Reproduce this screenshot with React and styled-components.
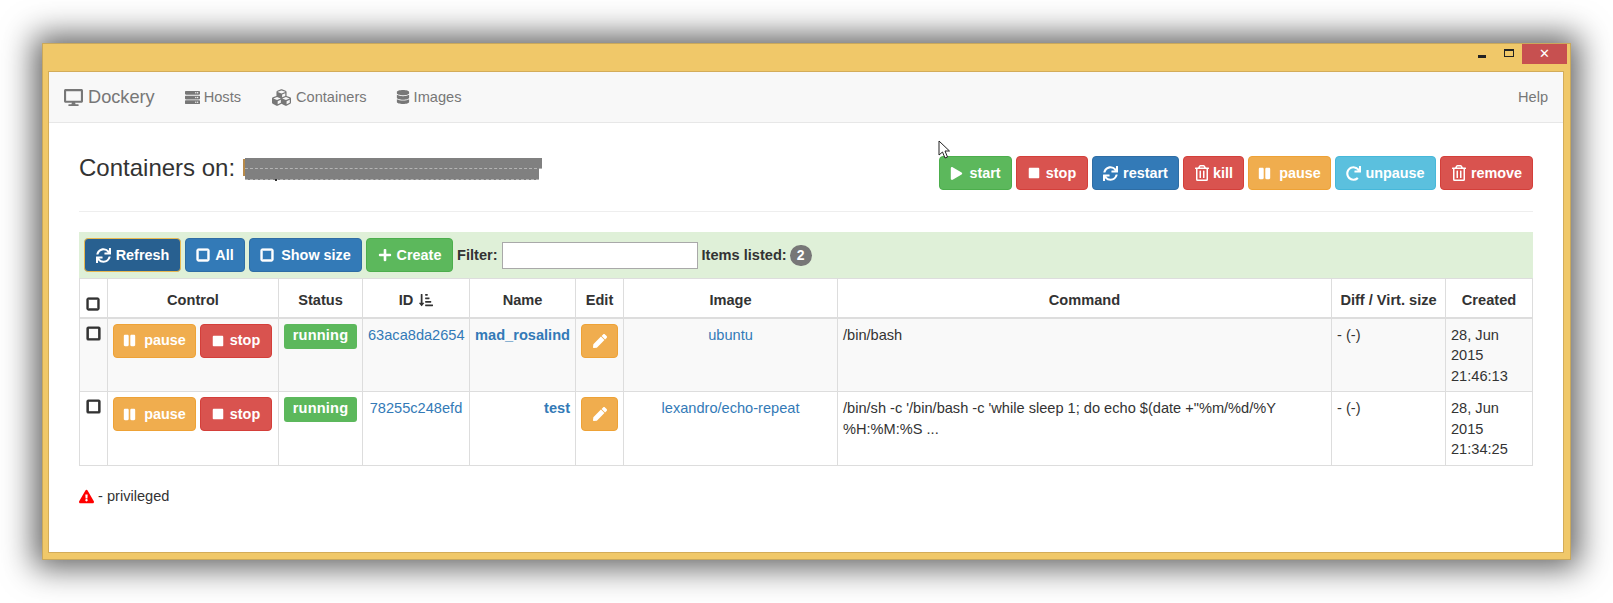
import styled, { createGlobalStyle } from 'styled-components';
import {
  FaDesktop, FaServer, FaCubes, FaDatabase, FaPlay, FaStop, FaSync, FaRegTrashAlt, FaPause, FaRedo,
  FaRegSquare, FaPlus, FaPen, FaSortAmountDownAlt, FaExclamationTriangle,
} from 'react-icons/fa';

const GlobalStyle = createGlobalStyle`
  html, body {
    margin: 0;
    height: 100%;
    overflow: hidden;
    background: #fff;
    font-family: "Liberation Sans", Arial, sans-serif;
    font-size: 14.6px;
    line-height: 20.6px;
    color: #333;
  }
`;

const Page = styled.div`
  padding: 43px 42px 0 42px;
`;

const Window = styled.div`
  position: relative;
  height: 517px;
  box-sizing: border-box;
  display: flex;
  flex-direction: column;
  background: #f0c869;
  border: 1px solid #c9a85c;
  box-shadow: 0 0 30px 8px rgba(0, 0, 0, 0.62);
  padding: 0 6px 6px 5px;
`;

const TitleBar = styled.div`
  height: 27px;
  flex: none;
  display: flex;
  justify-content: flex-end;
  align-items: flex-start;
  margin-right: -3px;
`;

const MinButton = styled.span`
  width: 8px;
  height: 3px;
  background: #222;
  margin: 11px 18px 0 0;
`;

const MaxButton = styled.span`
  width: 8px;
  height: 5px;
  border: 1px solid #222;
  border-top-width: 2px;
  margin: 5px 8px 0 0;
`;

const CloseButton = styled.span`
  width: 45px;
  height: 20px;
  background: #c75050;
  color: #fff;
  font-size: 13px;
  line-height: 19px;
  text-align: center;
`;

const Inner = styled.div`
  flex: 1;
  display: flex;
  flex-direction: column;
  background: #fff;
  border: 1px solid #d3ac5a;
`;

const Navbar = styled.nav`
  height: 50px;
  flex: none;
  display: flex;
  align-items: center;
  padding: 0 15px;
  background: #f8f8f8;
  border-bottom: 1px solid #e7e7e7;
  color: #777;
`;

const Brand = styled.span`
  display: flex;
  align-items: center;
  gap: 5px;
  font-size: 18.2px;
  margin-right: 30px;
  svg { font-size: 19px; }
`;

const NavLink = styled.span`
  display: flex;
  align-items: center;
  gap: ${props => props.$gap || 4}px;
  margin-right: ${props => props.$margin || 29}px;
  svg { font-size: ${props => props.$icon || 15}px; }
`;

const Help = styled.span`
  margin-left: auto;
`;

const Content = styled.main`
  padding: 33px 30px 0 30px;
`;

const HeaderRow = styled.div`
  display: flex;
  justify-content: space-between;
  padding-bottom: 21px;
  border-bottom: 1px solid #eee;
`;

const Heading = styled.h1`
  margin: -1px 0 0;
  display: flex;
  align-items: flex-start;
  gap: 10px;
  font-size: 24px;
  font-weight: 400;
  line-height: 26px;
  color: #333;
`;

const Redaction = styled.span`
  position: relative;
  display: block;
  width: 297px;
  margin-top: 3px;
  &::before {
    content: '';
    position: absolute;
    left: -2px;
    top: 1px;
    width: 2px;
    height: 17px;
    background: #b88a4a;
  }
  &::after {
    content: '';
    position: absolute;
    left: 30px;
    top: 21px;
    width: 2px;
    height: 2px;
    background: #333;
  }
`;

const RedactionBar = styled.span`
  display: block;
  height: 10px;
  width: ${props => props.$width}px;
  background: #808080;
  border-bottom: 1px dashed #b4b4b4;
`;

const ButtonRow = styled.div`
  display: flex;
  gap: ${props => props.$gap || 4}px;
`;

const colors = {
  success: ['#5cb85c', '#4cae4c'],
  danger: ['#d9534f', '#d43f3a'],
  primary: ['#337ab7', '#2e6da4'],
  warning: ['#f0ad4e', '#eea236'],
  info: ['#5bc0de', '#46b8da'],
  focus: ['#286090', '#e8b84f'],
};

const Button = styled.span`
  box-sizing: border-box;
  height: 34px;
  width: ${props => props.$width}px;
  display: flex;
  align-items: center;
  justify-content: center;
  gap: ${props => props.$gap ?? 5}px;
  border-radius: 4px;
  border: 1px solid ${props => colors[props.$kind][1]};
  background: ${props => colors[props.$kind][0]};
  color: #fff;
  font-weight: 700;
  font-size: 14.4px;
  svg { font-size: ${props => props.$icon || 14}px; flex: none; }
`;

const ThickSquare = styled(FaRegSquare)`
  stroke: currentColor;
  stroke-width: 36;
`;

const Toolbar = styled.div`
  display: flex;
  align-items: center;
  gap: 4px;
  height: 46px;
  box-sizing: border-box;
  margin-top: 20px;
  padding: 0 5px;
  background: #dff0d8;
  font-weight: 700;
`;

const FilterInput = styled.input`
  box-sizing: border-box;
  width: 196px;
  height: 27px;
  border: 1px solid #a9a9a9;
  background: #fff;
  padding: 0 4px;
`;

const Badge = styled.span`
  display: inline-block;
  width: 22px;
  height: 21px;
  margin-left: -1px;
  border-radius: 11px;
  background: #777;
  color: #fff;
  font-size: 14px;
  line-height: 21px;
  text-align: center;
`;

const Table = styled.table`
  width: 1453px;
  table-layout: fixed;
  border-collapse: collapse;
  border: 1px solid #ddd;
`;

const HeadCell = styled.th`
  box-sizing: border-box;
  height: 39px;
  padding: 0 4px 6px;
  border: 1px solid #ddd;
  border-bottom: 2px solid #ddd;
  font-weight: 700;
  white-space: nowrap;
  vertical-align: bottom;
  svg { font-size: 14px; vertical-align: -2px; margin-left: 2px; }
`;

const Row = styled.tr`
  background: ${props => props.$striped ? '#f9f9f9' : '#fff'};
`;

const Cell = styled.td`
  height: 73px;
  box-sizing: border-box;
  padding: 5px 5px 5px;
  border: 1px solid #ddd;
  vertical-align: top;
  text-align: ${props => props.$align || 'left'};
`;

const CheckIcon = styled(ThickSquare)`
  display: block;
  font-size: 15px;
  color: #333;
  margin: 2px auto 0;
`;

const StatusLabel = styled.span`
  box-sizing: border-box;
  display: block;
  width: 73px;
  height: 25px;
  border-radius: 3px;
  background: #5cb85c;
  color: #fff;
  font-weight: 700;
  line-height: 23px;
  text-align: center;
  letter-spacing: 0.2px;
`;

const Link = styled.span`
  display: inline-block;
  color: #337ab7;
  font-weight: ${props => props.$bold ? 700 : 400};
  margin-top: 1px;
`;

const Plain = styled.span`
  display: block;
  &:first-child { margin-top: 1px; }
`;

const Legend = styled.div`
  display: flex;
  align-items: center;
  gap: 4px;
  margin-top: 20px;
  svg { color: #f00; font-size: 15px; }
`;

const Cursor = styled.svg`
  position: absolute;
  left: 895px;
  top: 96px;
  width: 14px;
  height: 20px;
`;

const columns = [
  ['', 28], ['Control', 171], ['Status', 84], ['ID', 107], ['Name', 106], ['Edit', 48],
  ['Image', 214], ['Command', 494], ['Diff / Virt. size', 114], ['Created', 87],
];

const containers = [
  {
    id: '63aca8da2654', name: 'mad_rosalind', image: 'ubuntu', command: '/bin/bash',
    created: ['28, Jun', '2015', '21:46:13'],
  },
  {
    id: '78255c248efd', name: 'test', image: 'lexandro/echo-repeat',
    command: `/bin/sh -c '/bin/bash -c 'while sleep 1; do echo $(date +"%m/%d/%Y %H:%M:%S ...`,
    created: ['28, Jun', '2015', '21:34:25'],
  },
];

function App() {
  return (
    <Page>
      <GlobalStyle />
      <Window>
        <TitleBar>
          <MinButton />
          <MaxButton />
          <CloseButton>✕</CloseButton>
        </TitleBar>
        <Inner>
          <Navbar>
            <Brand><FaDesktop />Dockery</Brand>
            <NavLink $margin={31}><FaServer />Hosts</NavLink>
            <NavLink $gap={5} $icon={19}><FaCubes />Containers</NavLink>
            <NavLink $icon={14}><FaDatabase />Images</NavLink>
            <Help>Help</Help>
          </Navbar>
          <Content>
            <HeaderRow>
              <Heading>
                Containers on:
                <Redaction>
                  <RedactionBar $width={297} />
                  <RedactionBar $width={294} />
                </Redaction>
              </Heading>
              <ButtonRow>
                <Button $kind="success" $width={73} $icon={13} $gap={6}><FaPlay />start</Button>
                <Button $kind="danger" $width={72} $icon={12} $gap={6}><FaStop />stop</Button>
                <Button $kind="primary" $width={87} $icon={15}><FaSync />restart</Button>
                <Button $kind="danger" $width={61} $icon={16} $gap={3}><FaRegTrashAlt />kill</Button>
                <Button $kind="warning" $width={83} $icon={13} $gap={8}><FaPause />pause</Button>
                <Button $kind="info" $width={101} $icon={15} $gap={4}><FaRedo />unpause</Button>
                <Button $kind="danger" $width={93} $icon={16} $gap={4}><FaRegTrashAlt />remove</Button>
              </ButtonRow>
            </HeaderRow>
            <Toolbar>
              <Button $kind="focus" $width={97} $icon={15}><FaSync />Refresh</Button>
              <Button $kind="primary" $width={60}><ThickSquare />All</Button>
              <Button $kind="primary" $width={113} $gap={7}><ThickSquare />Show size</Button>
              <Button $kind="success" $width={87}><FaPlus />Create</Button>
              <span>Filter:</span>
              <FilterInput />
              <span>Items listed:</span>
              <Badge>2</Badge>
            </Toolbar>
            <Table>
              <colgroup>
                {columns.map(([title, width]) => <col key={title} width={width} />)}
              </colgroup>
              <thead>
                <tr>
                  {columns.map(([title]) => (
                    <HeadCell key={title}>
                      {title === '' ? <CheckIcon /> : title}
                      {title === 'ID' ? <> <FaSortAmountDownAlt /></> : null}
                    </HeadCell>
                  ))}
                </tr>
              </thead>
              <tbody>
                {containers.map((c, i) => (
                  <Row key={c.id} $striped={i === 0}>
                    <Cell><CheckIcon /></Cell>
                    <Cell>
                      <ButtonRow>
                        <Button $kind="warning" $width={83} $icon={13} $gap={8}><FaPause />pause</Button>
                        <Button $kind="danger" $width={72} $icon={12} $gap={6}><FaStop />stop</Button>
                      </ButtonRow>
                    </Cell>
                    <Cell><StatusLabel>running</StatusLabel></Cell>
                    <Cell $align="center"><Link>{c.id}</Link></Cell>
                    <Cell $align="right"><Link $bold>{c.name}</Link></Cell>
                    <Cell>
                      <Button $kind="warning" $width={37}><FaPen /></Button>
                    </Cell>
                    <Cell $align="center"><Link>{c.image}</Link></Cell>
                    <Cell><Plain>{c.command}</Plain></Cell>
                    <Cell><Plain>- (-)</Plain></Cell>
                    <Cell>{c.created.map(line => <Plain key={line}>{line}</Plain>)}</Cell>
                  </Row>
                ))}
              </tbody>
            </Table>
            <Legend><FaExclamationTriangle /> - privileged</Legend>
          </Content>
        </Inner>
        <Cursor viewBox="0 0 14 20">
          <path d="M1 1 L1 15 L4.5 12 L7 18 L9.5 17 L7 11 L11.5 11 Z" fill="#fff" stroke="#222" strokeWidth="1" />
        </Cursor>
      </Window>
    </Page>
  );
}

export default App;
